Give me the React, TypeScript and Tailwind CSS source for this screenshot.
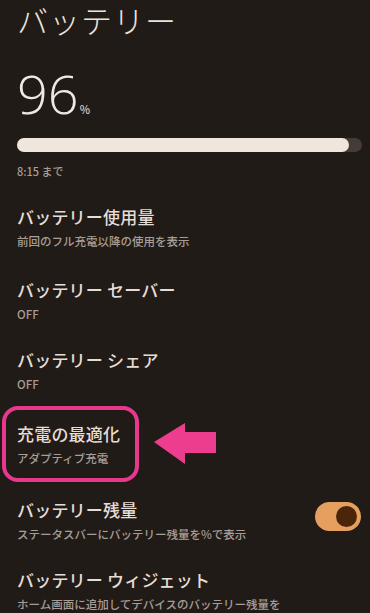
import React from "react";

const font = { fontFamily: '"Noto Sans CJK JP", "Noto Sans", Roboto, sans-serif' };

function Item({ title, sub, className = "", children }: { title: string; sub: string; className?: string; children?: React.ReactNode }) {
  return (
    <div className={"flex items-center justify-between " + className}>
      <div className="flex flex-col">
        <div className="text-[17px] leading-[22px] font-medium text-[#e6ddd6] tracking-[0.2px]">{title}</div>
        <div className="text-[11.5px] leading-[16px] mt-[5px] text-[#a79d96] font-medium">{sub}</div>
      </div>
      {children}
    </div>
  );
}

export default function App() {
  return (
    <div className="w-[370px] h-[613px] overflow-hidden bg-[#211b17]" style={font}>
      <div className="pl-[17px] pr-[9px]">
        <div className="text-[31px] leading-[40px] font-light text-[#ece4dc] tracking-[1px]">バッテリー</div>
        <div className="flex items-end mt-[31px] h-[44px]">
          <span className="text-[54px] leading-[44px] font-light text-[#f1e9e1]" style={{ fontFamily: '"Open Sans", sans-serif' }}>96</span>
          <span className="text-[11px] leading-[11px] ml-[1px] mb-[0px] text-[#d8cfc8] font-medium">%</span>
        </div>
        <div className="mt-[23px] h-[14px] w-[345px] rounded-full bg-[#453c37] flex">
          <div className="h-full w-[332px] rounded-full bg-[#efe6dc]" />
        </div>
        <div className="mt-[12px] text-[11px] leading-[14px] text-[#a79d96] font-medium">8:15 まで</div>

        <div className="flex flex-col mt-[28px]">
          <Item title="バッテリー使用量" sub="前回のフル充電以降の使用を表示" />
          <Item className="mt-[30px]" title="バッテリー セーバー" sub="OFF" />
          <Item className="mt-[27px]" title="バッテリー シェア" sub="OFF" />
          <div className="relative mt-[31px]">
            <Item title="充電の最適化" sub="アダプティブ充電" />
            <div className="absolute left-[-15px] top-[-17px] w-[137px] h-[76px] rounded-[16px] border-[4px] border-[#e8388e]" />
            <svg className="absolute left-[137px] top-[0px]" width="62" height="41" viewBox="0 0 62 41">
              <polygon points="0,19 31,0 31,9 62,9 62,30 31,30 31,41" fill="#ec3d8f" />
            </svg>
          </div>
          <Item className="mt-[33px]" title="バッテリー残量" sub="ステータスバーにバッテリー残量を%で表示">
            <div className="w-[46px] h-[29px] -mt-[8px] rounded-full bg-[#e5a060] flex items-center justify-end pr-[4px]">
              <div className="w-[21px] h-[21px] rounded-full bg-[#4a2508]" />
            </div>
          </Item>
          <Item className="mt-[27px]" title="バッテリー ウィジェット" sub="ホーム画面に追加してデバイスのバッテリー残量を" />
        </div>
      </div>
    </div>
  );
}
